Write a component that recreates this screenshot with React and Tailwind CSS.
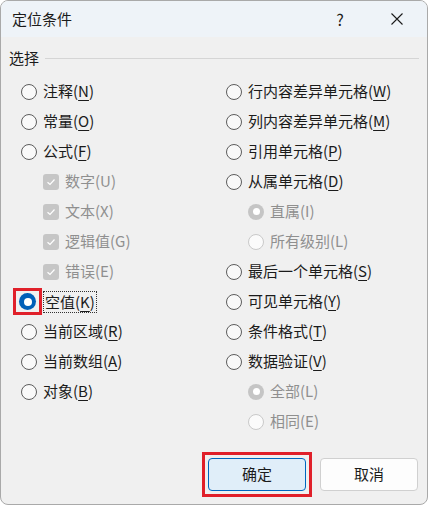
const font = { fontFamily: '"Microsoft YaHei UI", "Noto Sans CJK SC", "Noto Sans", sans-serif' };

function Radio({ checked, disabled }) {
  if (checked && disabled) {
    return (
      <span className="flex h-[16px] w-[16px] items-center justify-center rounded-full bg-[#c5c5c5]">
        <span className="h-[7px] w-[7px] rounded-full bg-white" />
      </span>
    );
  }
  if (checked) {
    return (
      <span className="flex h-[17px] w-[17px] items-center justify-center rounded-full bg-[#005fb8]">
        <span className="h-[8px] w-[8px] rounded-full bg-white" />
      </span>
    );
  }
  return (
    <span
      className={`h-[16px] w-[16px] rounded-full border ${
        disabled ? "border-[#c9c9c9] bg-[#fbfbfb]" : "border-[#5c5c5c] bg-[#f9f9f9]"
      }`}
    />
  );
}

function Check() {
  return (
    <span className="flex h-[16px] w-[16px] items-center justify-center rounded-[3px] bg-[#c6c6c6]">
      <svg width="10" height="10" viewBox="0 0 10 10">
        <path d="M1.5 5.2 L4 7.5 L8.5 2.5" fill="none" stroke="#fff" strokeWidth="1.2" />
      </svg>
    </span>
  );
}

function Label({ text, k, disabled }) {
  return (
    <span className={disabled ? "text-[#8f8f8f]" : "text-[#1b1b1b]"}>
      {text}(
      {disabled ? k : <span className="underline underline-offset-[3px]">{k}</span>})
    </span>
  );
}

function Row({ type, text, k, indent, disabled, checked }) {
  return (
    <div className={`flex h-[30px] items-center gap-[6px] ${indent ? "pl-[22px]" : ""}`}>
      {type === "check" ? <Check /> : <Radio checked={checked} disabled={disabled} />}
      <Label text={text} k={k} disabled={disabled} />
    </div>
  );
}

const left = [
  { text: "注释", k: "N" },
  { text: "常量", k: "O" },
  { text: "公式", k: "F" },
  { type: "check", text: "数字", k: "U", indent: true, disabled: true },
  { type: "check", text: "文本", k: "X", indent: true, disabled: true },
  { type: "check", text: "逻辑值", k: "G", indent: true, disabled: true },
  { type: "check", text: "错误", k: "E", indent: true, disabled: true },
  { text: "空值", k: "K", checked: true },
  { text: "当前区域", k: "R" },
  { text: "当前数组", k: "A" },
  { text: "对象", k: "B" },
];

const right = [
  { text: "行内容差异单元格", k: "W" },
  { text: "列内容差异单元格", k: "M" },
  { text: "引用单元格", k: "P" },
  { text: "从属单元格", k: "D" },
  { text: "直属", k: "I", indent: true, disabled: true, checked: true },
  { text: "所有级别", k: "L", indent: true, disabled: true },
  { text: "最后一个单元格", k: "S" },
  { text: "可见单元格", k: "Y" },
  { text: "条件格式", k: "T" },
  { text: "数据验证", k: "V" },
  { text: "全部", k: "L", indent: true, disabled: true, checked: true },
  { text: "相同", k: "E", indent: true, disabled: true },
];

export default function App() {
  return (
    <div style={font} className="h-[505px] w-[428px] overflow-hidden text-[15px]">
      <div className="flex h-full flex-col overflow-hidden rounded-[8px] border border-[#a9a9a9] bg-[#f0f0f0]">
        {/* title bar */}
        <div className="flex h-[36px] shrink-0 items-center bg-[#eef3f8] pl-[11px] text-[#1b1b1b]">
          <span className="flex-1 text-[15px]">定位条件</span>
          <span className="w-[52px] text-center text-[16px]">?</span>
          <span className="flex w-[61px] justify-center">
            <svg width="12" height="12" viewBox="0 0 12 12">
              <path d="M0.5 0.5 L11.5 11.5 M11.5 0.5 L0.5 11.5" stroke="#1b1b1b" strokeWidth="1.1" />
            </svg>
          </span>
        </div>

        <div className="flex items-center gap-[6px] pl-[8px] pr-[8px] pt-[10px]">
          <span className="text-[#1b1b1b]">选择</span>
          <span className="h-px flex-1 bg-[#d5d5d5]" />
        </div>

        <div className="grid grid-cols-[205px_1fr] pl-[20px] pt-[7px]">
          <div className="flex flex-col">
            {left.map((r, i) =>
              r.checked ? (
                <div key={i} className="flex h-[30px] items-center">
                  <span className="-ml-[8px] flex h-[27px] w-[29px] items-center justify-center border-[3px] border-[#e0202a]">
                    <Radio checked />
                  </span>
                  <span className="ml-[1px] border border-dotted border-[#333] px-[1px] leading-[20px]">
                    <Label text={r.text} k={r.k} />
                  </span>
                </div>
              ) : (
                <Row key={i} {...r} />
              )
            )}
          </div>
          <div className="flex flex-col">
            {right.map((r, i) => (
              <Row key={i} {...r} />
            ))}
          </div>
        </div>

        <div className="mt-auto flex justify-end gap-[8px] pb-[7px] pr-[9px]">
          <div className="border-[3px] border-[#e0202a] p-[3px]">
            <button className="h-[33px] w-[98px] rounded-[4px] border border-[#0067c0] bg-[#e0eef9] text-[#1b1b1b]">
              确定
            </button>
          </div>
          <div className="pt-[6px]">
            <button className="h-[33px] w-[98px] rounded-[4px] border border-[#d0d0d0] bg-[#fdfdfd] text-[#1b1b1b]">
              取消
            </button>
          </div>
        </div>
      </div>
    </div>
  );
}
